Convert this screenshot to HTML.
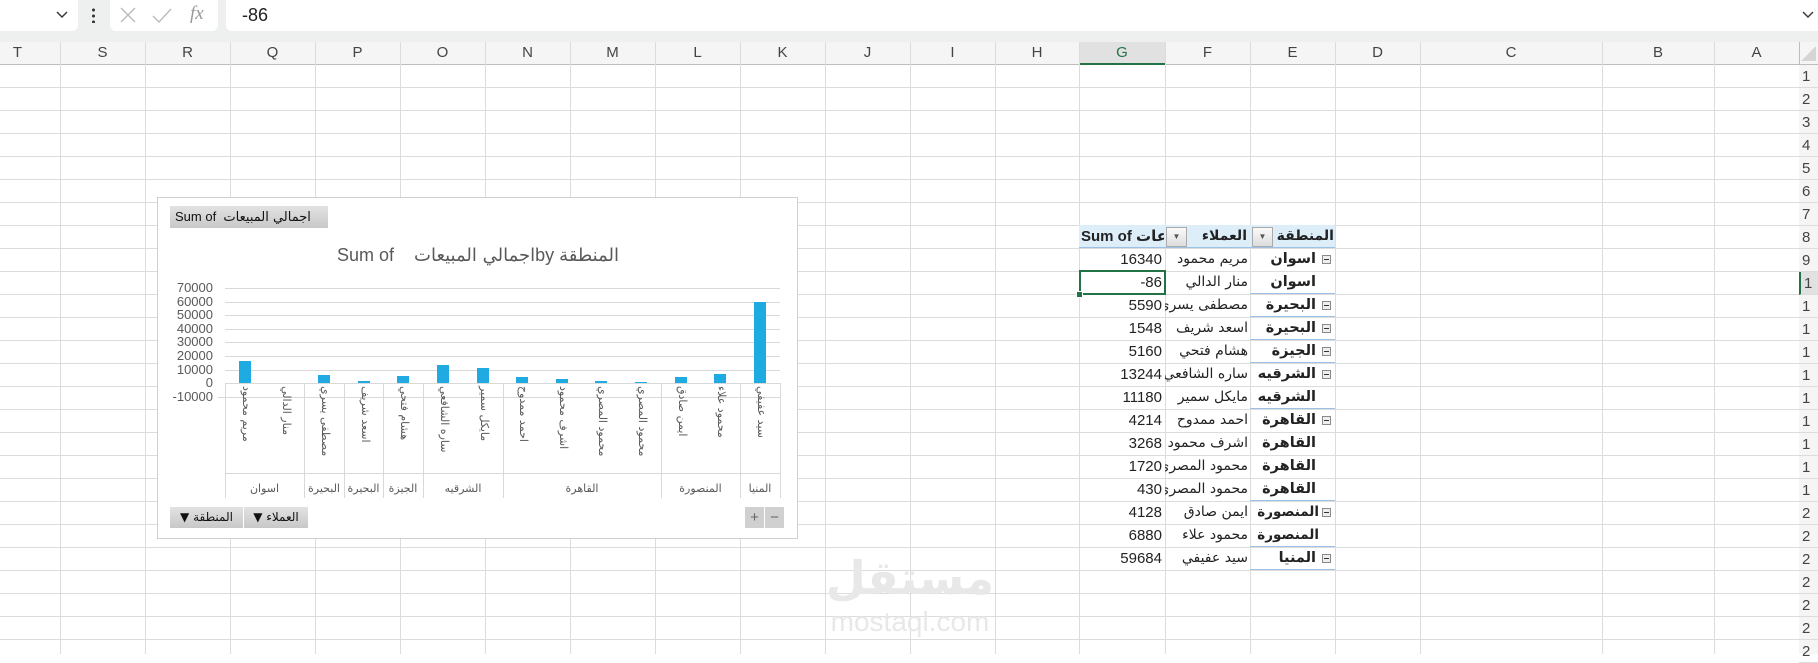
<!DOCTYPE html>
<html><head><meta charset="utf-8">
<style>
*{margin:0;padding:0;box-sizing:border-box}
body{width:1818px;height:654px;overflow:hidden;background:#fff;position:relative;font-family:"Liberation Sans","DejaVu Sans",sans-serif;color:#222}
.a{position:absolute}
.vl{position:absolute;top:42px;width:1px;height:612px;background:#dcdcdc}
.ch{position:absolute;top:42px;height:22px;line-height:22px;text-align:center;font-size:15px;color:#444}
.rn{position:absolute;left:1799px;width:19px;height:23px;border-bottom:1px solid #dcdcdc;font-size:15px;color:#444;padding-left:3px;line-height:23px}
.pc{position:absolute;height:23px;line-height:23px;font-size:15px;white-space:nowrap;overflow:hidden}
.ar{font-family:"DejaVu Sans","Liberation Sans",sans-serif}
.box{position:absolute;width:9px;height:9px;border:1px solid #8a8a8a;background:#eee}
.box:after{content:"";position:absolute;left:1px;top:3px;width:5px;height:1px;background:#333}
.gl{position:absolute;left:225px;width:555px;height:1px;background:#d9d9d9}
.yl{position:absolute;left:150px;width:63px;text-align:right;font-size:13px;color:#595959;line-height:14px}
.bar{position:absolute;width:12px;background:#1fabe2}
.cl{position:absolute;top:386px;writing-mode:vertical-rl;font-size:11px;color:#595959;font-family:"DejaVu Sans",sans-serif;width:16px;white-space:nowrap}
.gp{position:absolute;top:482px;font-size:11px;color:#595959;font-family:"DejaVu Sans",sans-serif;text-align:center;white-space:nowrap}
.sep{position:absolute;top:383px;width:1px;height:115px;background:#d9d9d9}
.dd{position:absolute;top:227px;width:21px;height:20px;border:1px solid #aaa;background:linear-gradient(#fafafa,#ddd);font-size:8px;color:#555;text-align:center;line-height:18px}
.e{font-weight:bold;font-size:14.5px}
</style></head><body>
<div class="a" style="left:0;top:0;width:1818px;height:42px;background:#eef0f0"></div>
<div class="a" style="left:0;top:0;width:78px;height:31px;background:#fff;border-radius:0 0 6px 0"></div>
<svg class="a" style="left:56px;top:11px" width="12" height="8"><path d="M1 1 L6 6 L11 1" stroke="#333" stroke-width="1.4" fill="none"/></svg>
<div class="a" style="left:92px;top:7px;width:3px;height:16px;background:radial-gradient(circle,#333 1.4px,transparent 1.6px) 0 0/3px 6px"></div>
<div class="a" style="left:110px;top:0;width:108px;height:31px;background:#fff;border-radius:0 0 6px 6px"></div>
<svg class="a" style="left:118px;top:6px" width="20" height="18"><path d="M3 2 L17 16 M17 2 L3 16" stroke="#bbb" stroke-width="1.4"/></svg>
<svg class="a" style="left:151px;top:6px" width="22" height="18"><path d="M2 10 L8 16 L20 3" stroke="#bbb" stroke-width="1.4" fill="none"/></svg>
<div class="a" style="left:190px;top:3px;font-size:19px;font-style:italic;color:#999;font-family:'Liberation Serif',serif">fx</div>
<div class="a" style="left:226px;top:0;width:1592px;height:31px;background:#fff;border-radius:0 0 0 6px"></div>
<div class="a" style="left:242px;top:5px;font-size:18px;color:#222">-86</div>
<svg class="a" style="left:1802px;top:11px" width="12" height="8"><path d="M1 1 L6 6 L11 1" stroke="#333" stroke-width="1.4" fill="none"/></svg>
<div class="a" style="left:0;top:42px;width:1818px;height:23px;background:#f5f5f5;border-bottom:1px solid #bdbdbd"></div>
<div class="a" style="left:1079px;top:42px;width:86px;height:23px;background:#e1e1e1;border-bottom:2px solid #217346"></div>
<div class="a" style="left:0;top:65px;width:1799px;height:589px;background:repeating-linear-gradient(to bottom,transparent 0,transparent 22px,#dcdcdc 22px,#dcdcdc 23px)"></div>
<div class="vl" style="left:60px"></div><div class="vl" style="left:145px"></div><div class="vl" style="left:230px"></div><div class="vl" style="left:315px"></div><div class="vl" style="left:400px"></div><div class="vl" style="left:485px"></div><div class="vl" style="left:570px"></div><div class="vl" style="left:655px"></div><div class="vl" style="left:740px"></div><div class="vl" style="left:825px"></div><div class="vl" style="left:910px"></div><div class="vl" style="left:995px"></div><div class="vl" style="left:1079px"></div><div class="vl" style="left:1165px"></div><div class="vl" style="left:1250px"></div><div class="vl" style="left:1335px"></div><div class="vl" style="left:1420px"></div><div class="vl" style="left:1602px"></div><div class="vl" style="left:1714px"></div><div class="vl" style="left:1799px;background:#bdbdbd"></div>
<div class="ch" style="left:0;width:35px">T</div><div class="ch" style="left:60px;width:85px">S</div><div class="ch" style="left:145px;width:85px">R</div><div class="ch" style="left:230px;width:85px">Q</div><div class="ch" style="left:315px;width:85px">P</div><div class="ch" style="left:400px;width:85px">O</div><div class="ch" style="left:485px;width:85px">N</div><div class="ch" style="left:570px;width:85px">M</div><div class="ch" style="left:655px;width:85px">L</div><div class="ch" style="left:740px;width:85px">K</div><div class="ch" style="left:825px;width:85px">J</div><div class="ch" style="left:910px;width:85px">I</div><div class="ch" style="left:995px;width:84px">H</div><div class="ch" style="left:1079px;width:86px;color:#217346">G</div><div class="ch" style="left:1165px;width:85px">F</div><div class="ch" style="left:1250px;width:85px">E</div><div class="ch" style="left:1335px;width:85px">D</div><div class="ch" style="left:1420px;width:182px">C</div><div class="ch" style="left:1602px;width:112px">B</div><div class="ch" style="left:1714px;width:85px">A</div>
<div class="a" style="left:1801px;top:46px;width:0;height:0;border-left:15px solid transparent;border-bottom:15px solid #d5d5d5"></div>
<div class="a" style="left:1799px;top:65px;width:19px;height:589px;background:#f5f5f5"></div>
<div class="rn" style="top:65px">1</div><div class="rn" style="top:88px">2</div><div class="rn" style="top:111px">3</div><div class="rn" style="top:134px">4</div><div class="rn" style="top:157px">5</div><div class="rn" style="top:180px">6</div><div class="rn" style="top:203px">7</div><div class="rn" style="top:226px">8</div><div class="rn" style="top:249px">9</div><div class="rn" style="top:272px;background:#e1e1e1;border-left:2px solid #217346">1</div><div class="rn" style="top:295px">1</div><div class="rn" style="top:318px">1</div><div class="rn" style="top:341px">1</div><div class="rn" style="top:364px">1</div><div class="rn" style="top:387px">1</div><div class="rn" style="top:410px">1</div><div class="rn" style="top:433px">1</div><div class="rn" style="top:456px">1</div><div class="rn" style="top:479px">1</div><div class="rn" style="top:502px">2</div><div class="rn" style="top:525px">2</div><div class="rn" style="top:548px">2</div><div class="rn" style="top:571px">2</div><div class="rn" style="top:594px">2</div><div class="rn" style="top:617px">2</div><div class="rn" style="top:640px">2</div>

<div class="a ar" style="left:820px;top:548px;width:180px;text-align:center;font-size:46px;font-weight:bold;color:#e8e8e8;line-height:60px">مستقل</div>
<div class="a" style="left:822px;top:606px;width:176px;text-align:center;font-size:28px;color:#e8e8e8;line-height:32px">mostaql.com</div>

<div class="a" style="left:1079px;top:225px;width:256px;height:23px;background:#ddeef9;border-bottom:1px solid #9bc2e6"></div>
<div class="pc" style="left:1081px;top:225px;width:83px;font-weight:bold"><span>Sum of </span><span class="ar">عات</span></div>
<div class="dd" style="left:1166px">&#9660;</div>
<div class="pc ar" style="left:1190px;top:225px;width:57px;text-align:right;font-weight:bold;font-size:14px">العملاء</div>
<div class="dd" style="left:1252px">&#9660;</div>
<div class="pc ar" style="left:1274px;top:225px;width:60px;text-align:right;font-weight:bold;font-size:14px">المنطقة</div>

<div class="pc" style="left:1080px;top:248px;width:82px;text-align:right">16340</div>
<div class="pc" style="left:1080px;top:271px;width:82px;text-align:right">-86</div>
<div class="pc" style="left:1080px;top:294px;width:82px;text-align:right">5590</div>
<div class="pc" style="left:1080px;top:317px;width:82px;text-align:right">1548</div>
<div class="pc" style="left:1080px;top:340px;width:82px;text-align:right">5160</div>
<div class="pc" style="left:1080px;top:363px;width:82px;text-align:right">13244</div>
<div class="pc" style="left:1080px;top:386px;width:82px;text-align:right">11180</div>
<div class="pc" style="left:1080px;top:409px;width:82px;text-align:right">4214</div>
<div class="pc" style="left:1080px;top:432px;width:82px;text-align:right">3268</div>
<div class="pc" style="left:1080px;top:455px;width:82px;text-align:right">1720</div>
<div class="pc" style="left:1080px;top:478px;width:82px;text-align:right">430</div>
<div class="pc" style="left:1080px;top:501px;width:82px;text-align:right">4128</div>
<div class="pc" style="left:1080px;top:524px;width:82px;text-align:right">6880</div>
<div class="pc" style="left:1080px;top:547px;width:82px;text-align:right">59684</div>
<div class="a" style="left:1079px;top:270px;width:87px;height:25px;border:2px solid #217346"></div>
<div class="a" style="left:1076px;top:291px;width:7px;height:7px;background:#217346;border:1px solid #fff"></div>

<div class="pc ar" style="left:1165px;top:248px;width:83px;text-align:right;direction:rtl;font-size:14px">مريم محمود</div>
<div class="pc ar" style="left:1165px;top:271px;width:83px;text-align:right;direction:rtl;font-size:14px">منار الدالي</div>
<div class="pc ar" style="left:1165px;top:294px;width:83px;text-align:right;direction:rtl;font-size:14px">مصطفى يسري</div>
<div class="pc ar" style="left:1165px;top:317px;width:83px;text-align:right;direction:rtl;font-size:14px">اسعد شريف</div>
<div class="pc ar" style="left:1165px;top:340px;width:83px;text-align:right;direction:rtl;font-size:14px">هشام فتحي</div>
<div class="pc ar" style="left:1165px;top:363px;width:83px;text-align:right;direction:rtl;font-size:14px">ساره الشافعي</div>
<div class="pc ar" style="left:1165px;top:386px;width:83px;text-align:right;direction:rtl;font-size:14px">مايكل سمير</div>
<div class="pc ar" style="left:1165px;top:409px;width:83px;text-align:right;direction:rtl;font-size:14px">احمد ممدوح</div>
<div class="pc ar" style="left:1165px;top:432px;width:83px;text-align:right;direction:rtl;font-size:14px">اشرف محمود</div>
<div class="pc ar" style="left:1165px;top:455px;width:83px;text-align:right;direction:rtl;font-size:14px">محمود المصري</div>
<div class="pc ar" style="left:1165px;top:478px;width:83px;text-align:right;direction:rtl;font-size:14px">محمود المصري</div>
<div class="pc ar" style="left:1165px;top:501px;width:83px;text-align:right;direction:rtl;font-size:14px">ايمن صادق</div>
<div class="pc ar" style="left:1165px;top:524px;width:83px;text-align:right;direction:rtl;font-size:14px">محمود علاء</div>
<div class="pc ar" style="left:1165px;top:547px;width:83px;text-align:right;direction:rtl;font-size:14px">سيد عفيفي</div>

<div class="pc ar e" style="left:1251px;top:248px;width:65px;text-align:right">اسوان</div><div class="box" style="left:1322px;top:255px"></div>
<div class="pc ar e" style="left:1251px;top:271px;width:65px;text-align:right">اسوان</div>
<div class="pc ar e" style="left:1251px;top:294px;width:65px;text-align:right">البحيرة</div><div class="box" style="left:1322px;top:301px"></div>
<div class="pc ar e" style="left:1251px;top:317px;width:65px;text-align:right">البحيرة</div><div class="box" style="left:1322px;top:324px"></div>
<div class="pc ar e" style="left:1251px;top:340px;width:65px;text-align:right">الجيزة</div><div class="box" style="left:1322px;top:347px"></div>
<div class="pc ar e" style="left:1251px;top:363px;width:65px;text-align:right">الشرقيه</div><div class="box" style="left:1322px;top:370px"></div>
<div class="pc ar e" style="left:1251px;top:386px;width:65px;text-align:right">الشرقيه</div>
<div class="pc ar e" style="left:1251px;top:409px;width:65px;text-align:right">القاهرة</div><div class="box" style="left:1322px;top:416px"></div>
<div class="pc ar e" style="left:1251px;top:432px;width:65px;text-align:right">القاهرة</div>
<div class="pc ar e" style="left:1251px;top:455px;width:65px;text-align:right">القاهرة</div>
<div class="pc ar e" style="left:1251px;top:478px;width:65px;text-align:right">القاهرة</div>
<div class="pc ar e" style="left:1251px;top:501px;width:68px;text-align:right;font-size:13.5px">المنصورة</div><div class="box" style="left:1322px;top:508px"></div>
<div class="pc ar e" style="left:1251px;top:524px;width:68px;text-align:right;font-size:13.5px">المنصورة</div>
<div class="pc ar e" style="left:1251px;top:547px;width:65px;text-align:right">المنيا</div><div class="box" style="left:1322px;top:554px"></div>
<div class="a" style="left:1250px;top:293px;width:85px;height:1px;background:#9bc2e6"></div>
<div class="a" style="left:1250px;top:316px;width:85px;height:1px;background:#9bc2e6"></div>
<div class="a" style="left:1250px;top:339px;width:85px;height:1px;background:#9bc2e6"></div>
<div class="a" style="left:1250px;top:362px;width:85px;height:1px;background:#9bc2e6"></div>
<div class="a" style="left:1250px;top:408px;width:85px;height:1px;background:#9bc2e6"></div>
<div class="a" style="left:1250px;top:500px;width:85px;height:1px;background:#9bc2e6"></div>
<div class="a" style="left:1250px;top:546px;width:85px;height:1px;background:#9bc2e6"></div>
<div class="a" style="left:1250px;top:569px;width:85px;height:1px;background:#9bc2e6"></div>

<div class="a" style="left:157px;top:197px;width:641px;height:342px;background:#fff;border:1px solid #d0d0d0"></div>
<div class="a" style="left:170px;top:206px;width:158px;height:22px;background:linear-gradient(#e2e2e2,#c8c8c8);font-size:13px;line-height:22px;padding-left:5px;color:#111">Sum of&nbsp; <span class="ar">اجمالي المبيعات</span></div>
<div class="a" style="left:300px;top:245px;width:356px;text-align:center;font-size:18px;color:#595959;white-space:nowrap">Sum of&nbsp;&nbsp;&nbsp; <span class="ar">اجمالي المبيعات</span>by <span class="ar">المنطقة</span></div>

<div class="gl" style="top:288px"></div><div class="gl" style="top:302px"></div><div class="gl" style="top:315px"></div><div class="gl" style="top:329px"></div><div class="gl" style="top:342px"></div><div class="gl" style="top:356px"></div><div class="gl" style="top:370px"></div><div class="gl" style="top:383px"></div><div class="gl" style="top:397px;left:218px;width:562px"></div>
<div class="yl" style="top:281px">70000</div><div class="yl" style="top:295px">60000</div><div class="yl" style="top:308px">50000</div><div class="yl" style="top:322px">40000</div><div class="yl" style="top:335px">30000</div><div class="yl" style="top:349px">20000</div><div class="yl" style="top:363px">10000</div><div class="yl" style="top:376px">0</div><div class="yl" style="top:390px">-10000</div>

<div class="bar" style="left:239px;top:361px;height:22px"></div>
<div class="bar" style="left:318px;top:375px;height:8px"></div>
<div class="bar" style="left:358px;top:381px;height:2px"></div>
<div class="bar" style="left:397px;top:376px;height:7px"></div>
<div class="bar" style="left:437px;top:365px;height:18px"></div>
<div class="bar" style="left:477px;top:368px;height:15px"></div>
<div class="bar" style="left:516px;top:377px;height:6px"></div>
<div class="bar" style="left:556px;top:379px;height:4px"></div>
<div class="bar" style="left:595px;top:381px;height:2px"></div>
<div class="bar" style="left:635px;top:382px;height:1px"></div>
<div class="bar" style="left:675px;top:377px;height:6px"></div>
<div class="bar" style="left:714px;top:374px;height:9px"></div>
<div class="bar" style="left:754px;top:302px;height:81px"></div>

<div class="sep" style="left:225px"></div><div class="sep" style="left:304px"></div><div class="sep" style="left:344px"></div><div class="sep" style="left:383px"></div><div class="sep" style="left:423px"></div><div class="sep" style="left:503px"></div><div class="sep" style="left:661px"></div><div class="sep" style="left:740px"></div><div class="sep" style="left:780px"></div>
<div class="a" style="left:225px;top:473px;width:555px;height:1px;background:#d9d9d9"></div>

<div class="cl" style="left:237px">مريم محمود</div>
<div class="cl" style="left:277px">منار الدالي</div>
<div class="cl" style="left:316px">مصطفى يسري</div>
<div class="cl" style="left:356px">اسعد شريف</div>
<div class="cl" style="left:395px">هشام فتحي</div>
<div class="cl" style="left:435px">ساره الشافعي</div>
<div class="cl" style="left:475px">مايكل سمير</div>
<div class="cl" style="left:514px">احمد ممدوح</div>
<div class="cl" style="left:554px">اشرف محمود</div>
<div class="cl" style="left:593px">محمود المصري</div>
<div class="cl" style="left:633px">محمود المصري</div>
<div class="cl" style="left:673px">ايمن صادق</div>
<div class="cl" style="left:712px">محمود علاء</div>
<div class="cl" style="left:752px">سيد عفيفي</div>

<div class="gp" style="left:225px;width:79px">اسوان</div>
<div class="gp" style="left:304px;width:40px">البحيرة</div>
<div class="gp" style="left:344px;width:39px">البحيرة</div>
<div class="gp" style="left:383px;width:40px">الجيزة</div>
<div class="gp" style="left:423px;width:80px">الشرقيه</div>
<div class="gp" style="left:503px;width:158px">القاهرة</div>
<div class="gp" style="left:661px;width:79px">المنصورة</div>
<div class="gp" style="left:740px;width:40px">المنيا</div>

<div class="a ar" style="left:170px;top:507px;width:73px;height:21px;background:linear-gradient(#e2e2e2,#c8c8c8);font-size:12px;line-height:21px;text-align:center;color:#111">&#9660; المنطقة</div>
<div class="a ar" style="left:244px;top:507px;width:64px;height:21px;background:linear-gradient(#e2e2e2,#c8c8c8);font-size:12px;line-height:21px;text-align:center;color:#111">&#9660; العملاء</div>
<div class="a" style="left:745px;top:507px;width:19px;height:21px;background:#d0d0d0;font-size:15px;line-height:21px;text-align:center;color:#666">+</div>
<div class="a" style="left:765px;top:507px;width:19px;height:21px;background:#d0d0d0;font-size:15px;line-height:21px;text-align:center;color:#666">&minus;</div>
</body></html>
